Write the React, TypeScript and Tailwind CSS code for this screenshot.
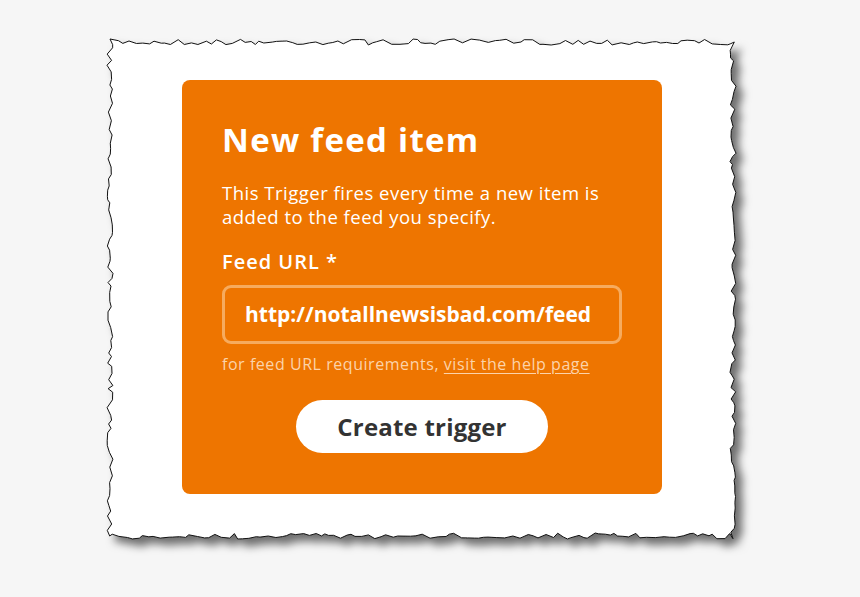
import React from "react";

function tornPath(w: number, h: number): string {
  let seed = 7;
  const rnd = () => {
    seed = (seed * 16807) % 2147483647;
    return (seed - 1) / 2147483646;
  };
  const pts: [number, number][] = [];
  const amp = 3;
  for (let x = 0; x < w; x += 3 + rnd() * 6) pts.push([x, (rnd() - 0.5) * 2 * amp]);
  for (let y = 0; y < h; y += 3 + rnd() * 6) pts.push([w + (rnd() - 0.5) * 2 * amp, y]);
  for (let x = w; x > 0; x -= 3 + rnd() * 6) pts.push([x, h + (rnd() - 0.5) * 2 * amp]);
  for (let y = h; y > 0; y -= 3 + rnd() * 6) pts.push([(rnd() - 0.5) * 2 * amp, y]);
  return "M" + pts.map(([x, y]) => `${x.toFixed(1)},${y.toFixed(1)}`).join(" L") + " Z";
}

export default function App() {
  const W = 623;
  const H = 494;
  const d = tornPath(W, H);
  return (
    <div className="w-[860px] h-[597px] bg-[#f6f6f6] pt-[42px] pl-[110px] overflow-hidden" style={{ fontFamily: "'Open Sans', 'Noto Sans', sans-serif" }}>
      <div className="relative w-[623px] h-[494px]">
        <svg className="absolute left-0 top-0 overflow-visible" width={W} height={H}>
          <defs>
            <filter id="sh" x="-10%" y="-10%" width="130%" height="130%">
              <feDropShadow dx="7" dy="7" stdDeviation="4" floodColor="#000" floodOpacity="0.55" />
            </filter>
          </defs>
          <path d={d} fill="#fff" stroke="#111" strokeWidth="1" filter="url(#sh)" />
        </svg>
        <div className="relative pt-[38px] pl-[72px]">
          <div className="w-[480px] h-[414px] rounded-[8px] bg-[#ee7500] pl-[40px] pr-[20px] pt-[38px] text-white">
            <h1 className="text-[33px] leading-[44px] font-bold tracking-[1.3px]">New feed item</h1>
            <p className="mt-[19px] text-[18.5px] leading-[24px] tracking-[0.5px] whitespace-nowrap">
              This Trigger fires every time a new item is<br />added to the feed you specify.
            </p>
            <div className="mt-[20px] text-[20px] leading-[26px] font-semibold tracking-[1px]">Feed URL *</div>
            <div className="mt-[10px] w-[400px] h-[59px] rounded-[9px] border-[3px] border-[#f6ab5e] flex items-center pl-[20px]">
              <span className="text-[21px] font-bold whitespace-nowrap">http://notallnewsisbad.com/feed</span>
            </div>
            <div className="mt-[9px] text-[16px] leading-[22px] text-[#fcd3aa] tracking-[0.55px] whitespace-nowrap">
              for feed URL requirements, <span className="underline underline-offset-[3px]">visit the help page</span>
            </div>
            <div className="mt-[25px] w-[400px] flex justify-center">
              <button className="w-[252px] h-[53px] rounded-full bg-white text-[#333333] text-[24px] font-bold tracking-[0.2px]">
                Create trigger
              </button>
            </div>
          </div>
        </div>
      </div>
    </div>
  );
}
